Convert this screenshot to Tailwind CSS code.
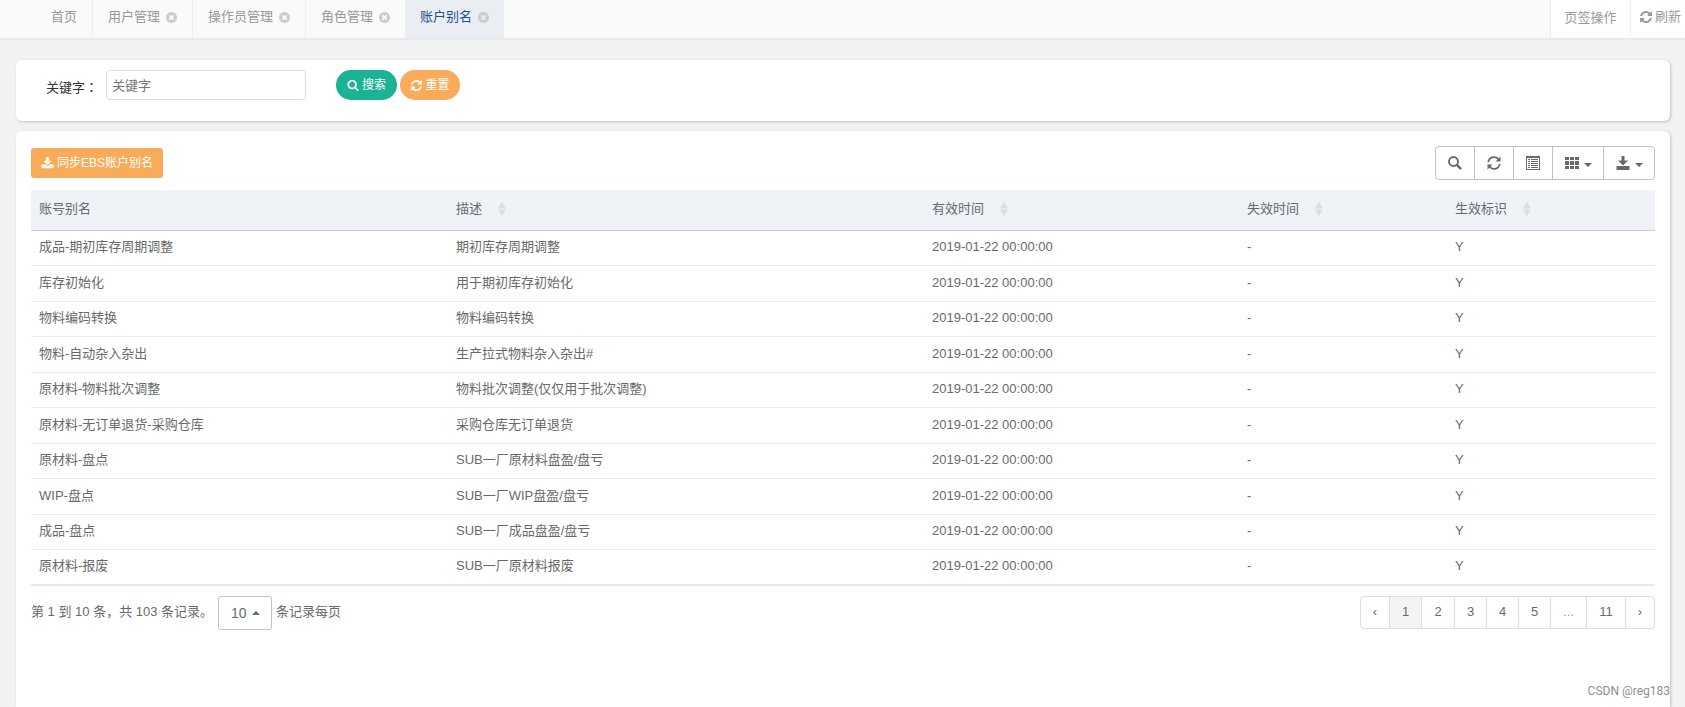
<!DOCTYPE html>
<html lang="zh-CN">
<head>
<meta charset="utf-8">
<meta name="viewport" content="width=device-width, initial-scale=1">
<title>账户别名</title>
<script src="https://cdn.jsdelivr.net/npm/@tailwindcss/browser@4"></script>
</head>
<body class="flex h-screen flex-col overflow-hidden bg-[#f2f2f2] font-['Liberation_Sans','Noto_Sans_CJK_SC',sans-serif] text-[13px] leading-5 text-[#676a6c]">

<svg class="hidden" aria-hidden="true">
  <symbol id="times" viewBox="128 128 1536 1536"><path d="M1277 1122q0-26-19-45l-181-181 181-181q19-19 19-45 0-27-19-46l-90-90q-19-19-46-19-26 0-45 19l-181 181-181-181q-19-19-45-19-27 0-46 19l-90 90q-19 19-19 46 0 26 19 45l181 181-181 181q-19 19-19 45 0 27 19 46l90 90q19 19 46 19 26 0 45-19l181-181 181 181q19 19 45 19 27 0 46-19l90-90q19-19 19-46zm387-226q0 209-103 385.5t-279.5 279.5-385.5 103-385.5-103-279.5-279.5-103-385.5 103-385.5 279.5-279.5 385.5-103 385.5 103 279.5 279.5 103 385.5z"/></symbol>
  <symbol id="search" viewBox="0 0 1792 1792"><path d="M1216 832q0-185-131.500-316.500t-316.500-131.500-316.500 131.500-131.500 316.500 131.500 316.500 316.500 131.500 316.500-131.500 131.500-316.500zm512 832q0 52-38 90t-90 38q-54 0-90-38l-343-342q-179 124-399 124-143 0-273.500-55.500t-225-150-150-225-55.500-273.500 55.500-273.500 150-225 225-150 273.500-55.500 273.500 55.500 225 150 150 225 55.500 273.500q0 220-124 399l343 343q37 37 37 90z"/></symbol>
  <symbol id="refresh" viewBox="0 0 1792 1792"><path d="M1639 1056q0 5-1 7-64 268-268 434.500t-478 166.500q-146 0-282.500-55t-243.500-157l-129 129q-19 19-45 19t-45-19-19-45v-448q0-26 19-45t45-19h448q26 0 45 19t19 45-19 45l-137 137q71 66 161 102t187 36q134 0 250-65t186-179q11-17 53-117 8-23 30-23h192q13 0 22.500 9.500t9.500 22.500zm25-800v448q0 26-19 45t-45 19h-448q-26 0-45-19t-19-45 19-45l138-138q-148-137-349-137-134 0-250 65t-186 179q-11 17-53 117-8 23-30 23h-199q-13 0-22.500-9.500t-9.500-22.500v-7q65-268 270-434.500t480-166.500q146 0 284 55.500t245 156.500l130-129q19-19 45-19t45 19 19 45z"/></symbol>
  <symbol id="download" viewBox="0 0 1792 1792"><path d="M1344 1344q0-26-19-45t-45-19-45 19-19 45 19 45 45 19 45-19 19-45zm256 0q0-26-19-45t-45-19-45 19-19 45 19 45 45 19 45-19 19-45zm128-224v320q0 40-28 68t-68 28h-1472q-40 0-68-28t-28-68v-320q0-40 28-68t68-28h465l135 136q58 56 136 56t136-56l136-136h464q40 0 68 28t28 68zm-325-569q17 41-14 70l-448 448q-18 19-45 19t-45-19l-448-448q-31-29-14-70 17-39 59-39h256v-448q0-26 19-45t45-19h256q26 0 45 19t19 45v448h256q42 0 59 39z"/></symbol>
  <symbol id="sort" viewBox="0 0 8 14"><path d="M4 0l4 6.500H0zM0 7.500h8l-4 6.500z"/></symbol>
  <symbol id="caret" viewBox="0 0 8 4"><path d="M0 0h8L4 4z"/></symbol>
</svg>

<header class="flex h-10 shrink-0 border-b-2 border-[#e7eaec] bg-[#fafafa] text-[#999]">
  <nav class="flex flex-1 pl-9">
    <a href="#" class="flex items-start border-r border-[#eee] px-[15px] pt-[7px]">首页</a>
    <a href="#" class="flex items-start gap-[6px] border-r border-[#eee] px-[15px] pt-[7px]">用户管理<svg class="mt-[5px] size-[11px] fill-[#ccc]"><use href="#times"/></svg></a>
    <a href="#" class="flex items-start gap-[6px] border-r border-[#eee] px-[15px] pt-[7px]">操作员管理<svg class="mt-[5px] size-[11px] fill-[#ccc]"><use href="#times"/></svg></a>
    <a href="#" class="flex items-start gap-[6px] px-[15px] pt-[7px]">角色管理<svg class="mt-[5px] size-[11px] fill-[#ccc]"><use href="#times"/></svg></a>
    <a href="#" aria-current="page" class="flex items-start gap-[6px] bg-[#eaedf1] px-[15px] pt-[7px] text-[#23508e]">账户别名<svg class="mt-[5px] size-[11px] fill-[#ccc]"><use href="#times"/></svg></a>
  </nav>
  <button type="button" class="flex w-20 justify-center border-l border-[#eee] bg-white pt-2">页签操作</button>
  <button type="button" class="flex w-[55px] items-start gap-[2px] border-l border-[#eee] bg-white pt-[7px] pl-2"><svg class="mt-[3px] size-[14px] fill-[#999]"><use href="#refresh"/></svg>刷新</button>
</header>

<main class="flex flex-1 flex-col gap-[10px] pt-5 pr-[15px] pl-4">
  <form class="flex rounded-md bg-white pt-[10px] pb-[21px] pl-[30px] shadow-[1px_1px_3px_rgba(0,0,0,0.2)]">
    <label for="keyword" class="w-[60px] pt-[7px] text-[#333]">关键字<span class="font-['Noto_Sans_CJK_TC',sans-serif]" lang="zh-TW">：</span></label>
    <input id="keyword" type="text" placeholder="关键字" class="h-[30px] w-[200px] rounded border border-[#ddd] px-[5px] placeholder:text-[#757575]">
    <button type="button" class="ml-[30px] flex h-[30px] w-[61px] items-center justify-center gap-[3px] rounded-full bg-[#1ab394] text-xs text-white"><svg class="size-3 fill-white"><use href="#search"/></svg>搜索</button>
    <button type="button" class="ml-[3px] flex h-[30px] w-[60px] items-center justify-center gap-[2px] rounded-full bg-[#f8ac59] text-xs text-white"><svg class="size-[13px] fill-white"><use href="#refresh"/></svg>重置</button>
  </form>

  <section class="relative flex-1 rounded-t-md bg-white px-[15px] pt-[15px] shadow-[1px_1px_3px_rgba(0,0,0,0.2)]">
    <div class="mb-[10px] flex items-center justify-between">
      <button type="button" class="flex h-[30px] items-center gap-[3px] rounded-[3px] bg-[#f8ac59] px-[10px] text-xs text-white"><svg class="size-[13px] fill-white"><use href="#download"/></svg>同步EBS账户别名</button>
      <div class="flex h-[34px] divide-x divide-[#c2c2c2] rounded border border-[#c2c2c2]">
        <button type="button" aria-label="搜索" class="flex w-[39px] items-center justify-center"><svg class="size-[14px]" viewBox="0 0 14 14" fill="none" stroke="#676a6c" stroke-width="1.900"><circle cx="5.500" cy="5.500" r="4.500"/><path stroke-width="2.400" d="M8.800 8.800l4.300 4.300"/></svg></button>
        <button type="button" aria-label="刷新" class="flex w-[39px] items-center justify-center"><svg class="size-[14px]" viewBox="0 0 14 14" fill="none" stroke="#676a6c" stroke-width="1.700"><path d="M1.200 6.200A5.900 5.900 0 0 1 11.500 3.200M12.800 7.800A5.900 5.900 0 0 1 2.500 10.800"/><path fill="#676a6c" stroke="none" d="M13.500.5v5H8.500zM.5 13.500v-5h5z"/></svg></button>
        <button type="button" aria-label="切换视图" class="flex w-[39px] items-center justify-center"><svg class="size-[14px]" viewBox="0 0 14 14" fill="#676a6c"><path fill-rule="evenodd" d="M0 0h14v14H0zM1 2v11h12V2z"/><path d="M2 3h2v1H2zM5 3h7v1H5zM2 5h2v1H2zM5 5h7v1H5zM2 7h2v1H2zM5 7h7v1H5zM2 9h2v1H2zM5 9h7v1H5zM2 11h2v1H2zM5 11h7v1H5z"/></svg></button>
        <button type="button" aria-label="选择列" class="flex w-[51px] items-center justify-center gap-[5px]"><svg class="size-[14px]" viewBox="0 0 14 14" fill="#676a6c"><path d="M0 1h4v3H0zM5 1h4v3H5zM10 1h4v3h-4zM0 5h4v4H0zM5 5h4v4H5zM10 5h4v4h-4zM0 10h4v3H0zM5 10h4v3H5zM10 10h4v3h-4z"/></svg><svg class="mt-[3px] h-1 w-2 fill-[#676a6c]"><use href="#caret"/></svg></button>
        <button type="button" aria-label="导出" class="flex w-[50px] items-center justify-center gap-[5px]"><svg class="size-[14px]" viewBox="0 0 14 14" fill="#676a6c"><path d="M5.500 0h3v4.500H12L7 9.500 2 4.500h3.500zM.5 10h13v4H.5z"/></svg><svg class="mt-[3px] h-1 w-2 fill-[#676a6c]"><use href="#caret"/></svg></button>
      </div>
    </div>

    <table class="w-full table-fixed border-collapse border-b-2 border-[#e7eaec]">
      <colgroup><col class="w-[417px]"><col class="w-[476px]"><col class="w-[315px]"><col class="w-[208px]"><col class="w-[208px]"></colgroup>
      <thead>
        <tr class="h-10 border-b border-[#c8cacc] bg-[#eff2f7] text-left *:px-2 *:pb-[2px] *:font-normal">
          <th>账号别名</th>
          <th><span class="flex items-center gap-4">描述<svg class="h-[14px] w-2 fill-[#ddd]"><use href="#sort"/></svg></span></th>
          <th><span class="flex items-center gap-4">有效时间<svg class="h-[14px] w-2 fill-[#ddd]"><use href="#sort"/></svg></span></th>
          <th><span class="flex items-center gap-4">失效时间<svg class="h-[14px] w-2 fill-[#ddd]"><use href="#sort"/></svg></span></th>
          <th><span class="flex items-center gap-4">生效标识<svg class="h-[14px] w-2 fill-[#ddd]"><use href="#sort"/></svg></span></th>
        </tr>
      </thead>
      <tbody class="divide-y divide-[#e7eaec] *:odd:h-[35px] *:even:h-9 *:*:px-2 *:*:pb-px">
        <tr><td>成品-期初库存周期调整</td><td>期初库存周期调整</td><td>2019-01-22 00:00:00</td><td>-</td><td>Y</td></tr>
        <tr><td>库存初始化</td><td>用于期初库存初始化</td><td>2019-01-22 00:00:00</td><td>-</td><td>Y</td></tr>
        <tr><td>物料编码转换</td><td>物料编码转换</td><td>2019-01-22 00:00:00</td><td>-</td><td>Y</td></tr>
        <tr><td>物料-自动杂入杂出</td><td>生产拉式物料杂入杂出#</td><td>2019-01-22 00:00:00</td><td>-</td><td>Y</td></tr>
        <tr><td>原材料-物料批次调整</td><td>物料批次调整(仅仅用于批次调整)</td><td>2019-01-22 00:00:00</td><td>-</td><td>Y</td></tr>
        <tr><td>原材料-无订单退货-采购仓库</td><td>采购仓库无订单退货</td><td>2019-01-22 00:00:00</td><td>-</td><td>Y</td></tr>
        <tr><td>原材料-盘点</td><td>SUB一厂原材料盘盈/盘亏</td><td>2019-01-22 00:00:00</td><td>-</td><td>Y</td></tr>
        <tr><td>WIP-盘点</td><td>SUB一厂WIP盘盈/盘亏</td><td>2019-01-22 00:00:00</td><td>-</td><td>Y</td></tr>
        <tr><td>成品-盘点</td><td>SUB一厂成品盘盈/盘亏</td><td>2019-01-22 00:00:00</td><td>-</td><td>Y</td></tr>
        <tr><td>原材料-报废</td><td>SUB一厂原材料报废</td><td>2019-01-22 00:00:00</td><td>-</td><td>Y</td></tr>
      </tbody>
    </table>

    <div class="mt-[10px] flex items-start justify-between">
      <div class="flex items-start">
        <span class="pt-[6px]">第 1 到 10 条，共 103 条记录。</span>
        <label class="relative ml-[5px] flex items-center text-sm">
          <select aria-label="每页记录数" class="h-[34px] w-[54px] appearance-none rounded-[3px] border border-[#c2c2c2] bg-white pl-3"><option>10</option><option>25</option><option>50</option></select>
          <svg class="pointer-events-none absolute right-3 h-1 w-2 rotate-180 fill-[#676a6c]"><use href="#caret"/></svg>
        </label>
        <span class="pt-[6px] pl-1">条记录每页</span>
      </div>
      <nav aria-label="分页" class="flex h-[33px] divide-x divide-[#ddd] overflow-hidden rounded border border-[#ddd] leading-[29px]">
        <a href="#" class="w-[29px] text-center">‹</a>
        <a href="#" aria-current="page" class="w-8 bg-[#f4f4f4] text-center">1</a>
        <a href="#" class="w-[33px] text-center">2</a>
        <a href="#" class="w-8 text-center">3</a>
        <a href="#" class="w-8 text-center">4</a>
        <a href="#" class="w-8 text-center">5</a>
        <span class="w-9 text-center text-[#999]">...</span>
        <a href="#" class="w-[39px] text-center">11</a>
        <a href="#" class="w-7 text-center">›</a>
      </nav>
    </div>
    <span class="absolute right-0 bottom-2 font-['Roboto',sans-serif] text-xs leading-4 text-[#8e8e8e]">CSDN @reg183</span>
  </section>
</main>
</body>
</html>
